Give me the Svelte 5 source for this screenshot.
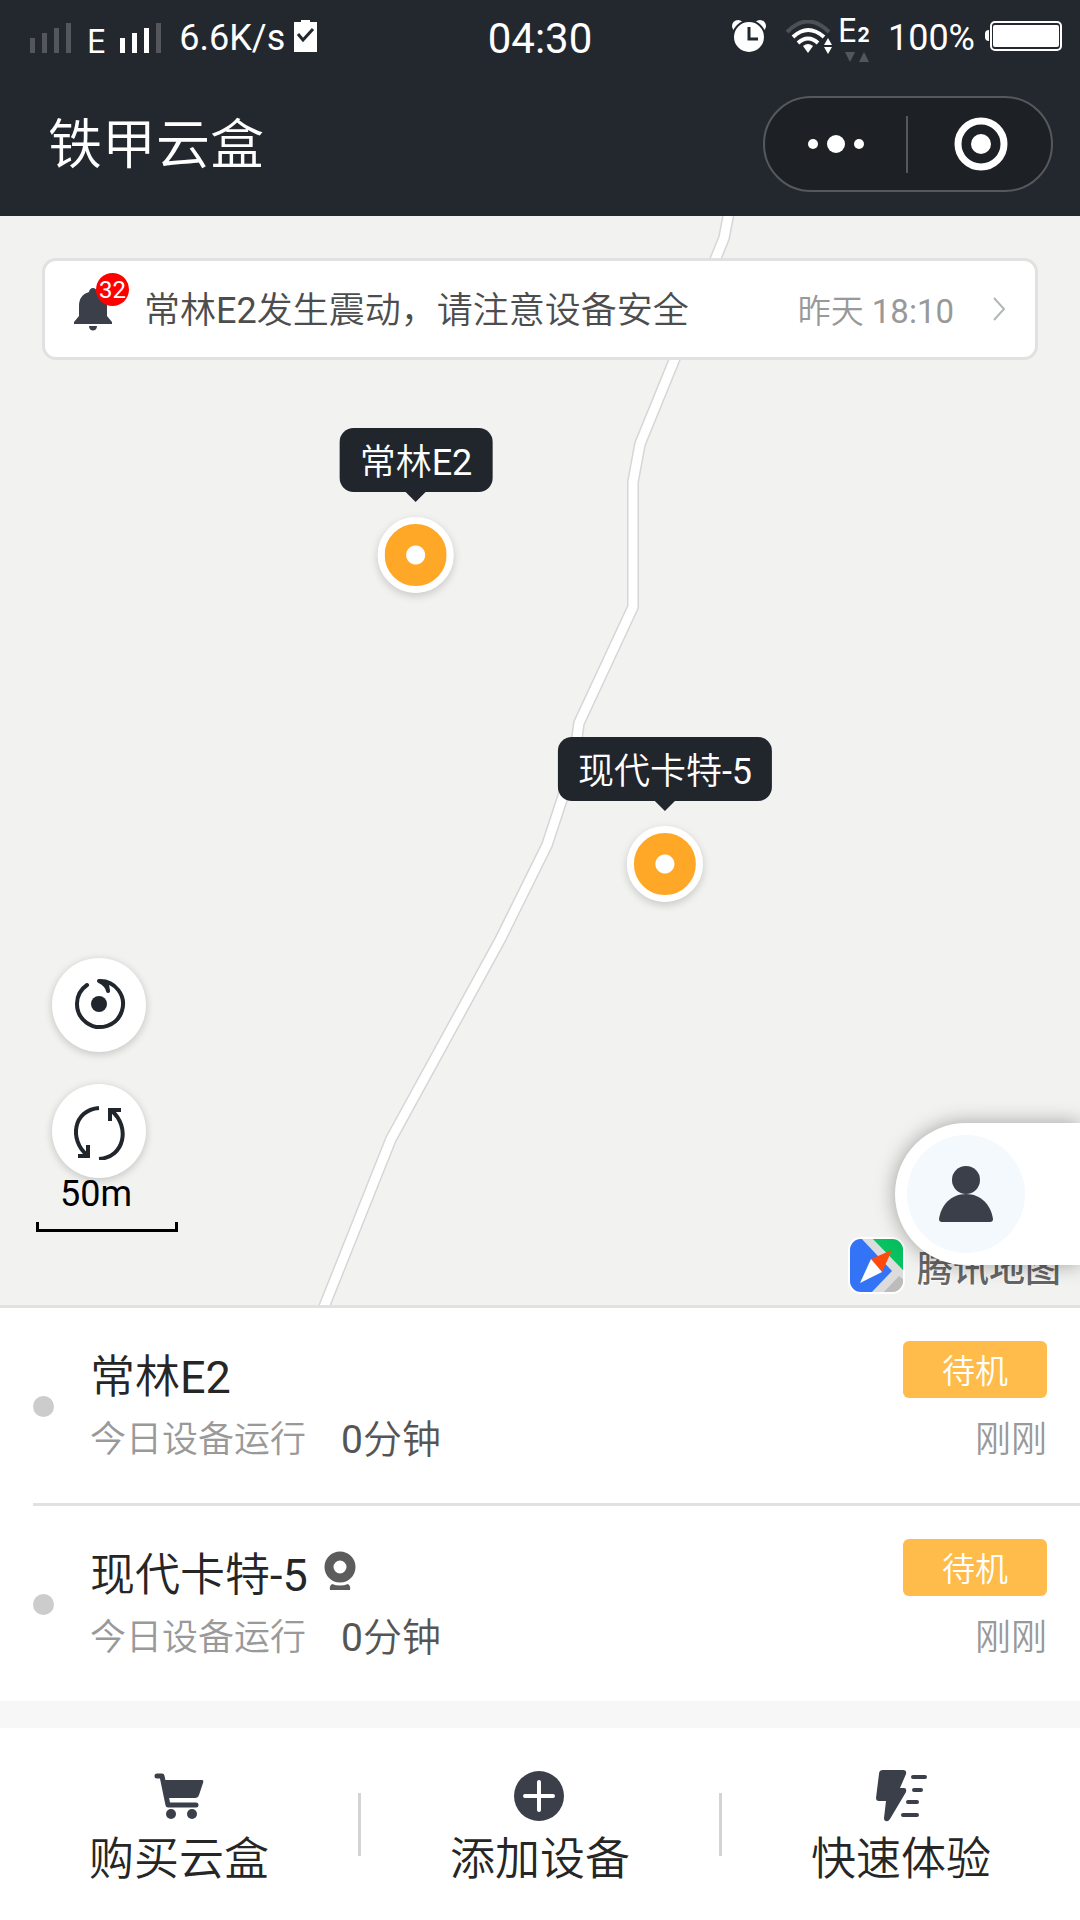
<script lang="ts">
	type Device = {
		id: number;
		name: string;
		runtime: string;
		status: string;
		updated: string;
		camera: boolean;
		x: number;
		y: number;
	};

	// x / y: where the tip of the pin's label stands on the map
	const devices: Device[] = [
		{ id: 1, name: '常林E2', runtime: '0分钟', status: '待机', updated: '刚刚', camera: false, x: 416, y: 286 },
		{ id: 2, name: '现代卡特-5', runtime: '0分钟', status: '待机', updated: '刚刚', camera: true, x: 665, y: 595 }
	];

	const road = '729,-4 724,22 640,228 633,266 633,391 579,507 573,550 547,629 500,724 391,923 322,1096';
</script>

{#snippet signal(level: number)}
	<svg class="signal" width="41" height="30" viewBox="0 0 41 30" aria-hidden="true">
		{#each [15, 20, 25, 30] as h, i}
			<rect x={i * 12} y={30 - h} width="5" height={h} fill={i < level ? '#fff' : '#53575c'} />
		{/each}
	</svg>
{/snippet}

<div class="page">
	<header>
		<div class="status">
			<div class="status-left">
				{@render signal(0)}
				<span class="net">E</span>
				{@render signal(3)}
				<span class="speed">6.6K/s</span>
				<svg width="23" height="32" viewBox="0 0 23 32" aria-hidden="true">
					<path d="M0 2h7V0h9v2h7v30H0z" fill="#fff" />
					<path d="M4 14l5 6 10-11" fill="none" stroke="#23282f" stroke-width="3" />
				</svg>
			</div>
			<span class="clock">04:30</span>
			<div class="status-right">
				<svg width="34" height="32" viewBox="0 0 34 32" aria-hidden="true">
					<circle cx="6" cy="6" r="6" fill="#fff" />
					<circle cx="28" cy="6" r="6" fill="#fff" />
					<circle cx="17" cy="17" r="16" fill="#fff" stroke="#23282f" stroke-width="2" />
					<path d="M17 7v12h9" fill="none" stroke="#23282f" stroke-width="3" />
				</svg>
				<svg class="wifi" width="46" height="34" viewBox="0 0 46 34" aria-hidden="true">
					<g fill="none" stroke-width="4">
						<path d="M1 12Q22-9 43 12" stroke="#4d5156" />
						<path d="M7 17Q22 3 38 17" stroke="#fff" />
						<path d="M12 23q10-9 20 0" stroke="#fff" />
					</g>
					<path d="M17 26q5-4 10 0l-5 7z" fill="#fff" />
					<path d="M38 25l4-7 4 7zM38 27l4 7 4-7z" fill="#fff" />
				</svg>
				<div class="net2">
					<span>E<b>2</b></span>
					<svg width="24" height="10" viewBox="0 0 24 10" aria-hidden="true">
						<path d="M0 0h10L5 10zM14 10h10L19 0z" fill="#53575c" />
					</svg>
				</div>
				<span class="percent">100%</span>
				<svg width="77" height="30" viewBox="0 0 77 30" aria-hidden="true">
					<path d="M4 9Q0 9 0 13v3q0 4 4 4z" fill="#fff" />
					<rect x="6" y="1" width="70" height="28" rx="4" fill="none" stroke="#fff" stroke-width="2" />
					<rect x="8" y="4" width="66" height="22" rx="2" fill="#fff" />
				</svg>
			</div>
		</div>
		<div class="nav">
			<h1>铁甲云盒</h1>
			<div class="capsule">
				<button aria-label="更多">
					<svg width="56" height="20" viewBox="0 0 56 20">
						<g fill="#fff">
							<circle cx="5" cy="10" r="5" />
							<circle cx="28" cy="10" r="9" />
							<circle cx="51" cy="10" r="5" />
						</g>
					</svg>
				</button>
				<span class="bar"></span>
				<button aria-label="关闭">
					<svg width="54" height="54" viewBox="0 0 54 54">
						<circle cx="27" cy="27" r="23" fill="none" stroke="#fff" stroke-width="7" />
						<circle cx="27" cy="27" r="10" fill="#fff" />
					</svg>
				</button>
			</div>
		</div>
	</header>

	<section class="map">
		<svg class="roads" viewBox="0 0 1080 1089" preserveAspectRatio="xMidYMin slice" aria-hidden="true">
			<polyline points={road} stroke="#d6d6d6" stroke-width="12" />
			<polyline points={road} stroke="#fff" stroke-width="9" />
		</svg>

		<a class="notice" href="#messages">
			<span class="bell">
				<svg width="38" height="43" viewBox="0 0 38 43" aria-hidden="true">
					<path d="M19 0c2 0 4 2 4 4 7 2 10 7 10 14v10l5 6v2H0v-2l5-6V18C5 11 8 6 15 4c0-2 2-4 4-4zM15 38h8c0 6-8 6-8 0z" fill="#3a3f4a" />
				</svg>
				<em>32</em>
			</span>
			<span class="message">常林E2发生震动，请注意设备安全</span>
			<time>昨天 18:10</time>
			<svg width="13" height="24" viewBox="0 0 13 24" aria-hidden="true">
				<path d="M1 1l10 11L1 23" fill="none" stroke="#b3b6b9" stroke-width="2" />
			</svg>
		</a>

		{#each devices as device (device.id)}
			<div class="pin" style="left: {device.x}px; top: {device.y}px">
				<span class="label">{device.name}</span>
				<span class="marker"></span>
			</div>
		{/each}

		<div class="controls">
			<button aria-label="定位">
				<svg width="54" height="54" viewBox="1 0 54 54">
					<path d="M16 7A23 23 0 1 0 28 3Q36 7 37 13" fill="none" stroke="#20262c" stroke-width="4" stroke-linecap="round" stroke-linejoin="round" />
					<path d="M28 2l10 3 1 9-4-6z" fill="#20262c" />
					<circle cx="28" cy="26" r="8" fill="#20262c" />
				</svg>
			</button>
			<button aria-label="刷新">
				<svg width="54" height="58" viewBox="0 0 54 58">
					<g fill="none" stroke="#20262c" stroke-width="4">
						<path d="M27 6C1 8-3 38 15 53M6 54h10V43" />
						<path d="M27 57C53 55 58 25 40 9M49 8H38v11" />
					</g>
				</svg>
			</button>
		</div>

		<div class="scale">
			<span>50m</span>
			<i></i>
		</div>

		<div class="brand">
			<svg width="57" height="57" viewBox="0 0 57 57" aria-hidden="true">
				<defs>
					<clipPath id="tile"><rect x="2" y="2" width="53" height="53" rx="11" /></clipPath>
				</defs>
				<rect width="57" height="57" rx="13" fill="#fff" />
				<g clip-path="url(#tile)">
					<rect width="57" height="57" fill="#dcdcdc" />
					<path d="M0 0h12l32 34L22 57H0z" fill="#3274f5" />
					<path d="M23 0h34v35z" fill="#08c160" />
					<path d="M34 57l17-18 6 5v13z" fill="#bcbcbc" />
				</g>
				<path d="M44 13L23 22l11 13z" fill="#ff4a0c" />
				<path d="M23 22L12 46l22-11z" fill="#fff" />
			</svg>
			<span>腾讯地图</span>
		</div>

		<a class="profile" href="#me" aria-label="我的">
			<span>
				<svg width="56" height="57" viewBox="0 0 56 57">
					<circle cx="28" cy="14" r="14" fill="#3a3f4a" />
					<path d="M28 28c15 0 25 11 27 25q0 3-3 3H4q-3 0-3-3C3 39 13 28 28 28z" fill="#3a3f4a" />
				</svg>
			</span>
		</a>
	</section>

	<ul class="devices">
		{#each devices as device (device.id)}
			<li>
				<span class="dot"></span>
				<div class="info">
					<h2>
						{device.name}
						{#if device.camera}
							<svg width="32" height="40" viewBox="0 0 32 40" aria-hidden="true">
								<circle cx="16" cy="16" r="11" fill="none" stroke="#5c5c5c" stroke-width="9" />
								<path d="M8 33q8 3 16 0 3 2 2 6H6q-1-4 2-6z" fill="#5c5c5c" />
							</svg>
						{/if}
					</h2>
					<p>今日设备运行 <strong>{device.runtime}</strong></p>
				</div>
				<div class="state">
					<span class="tag">{device.status}</span>
					<span class="updated">{device.updated}</span>
				</div>
			</li>
		{/each}
	</ul>

	<nav class="actions">
		<a href="#buy">
			<svg width="52" height="52" viewBox="0 0 52 52" aria-hidden="true">
				<path d="M4 6h5l6 29h28" fill="none" stroke="#3a3f4a" stroke-width="5" stroke-linecap="round" stroke-linejoin="round" />
				<path d="M12 10h37q2 0 1 3l-4 12q-1 3-4 3H14z" fill="#3a3f4a" />
				<circle cx="18" cy="44" r="5" fill="#3a3f4a" />
				<circle cx="39" cy="44" r="5" fill="#3a3f4a" />
			</svg>
			<span>购买云盒</span>
		</a>
		<i></i>
		<a href="#add">
			<svg width="52" height="52" viewBox="0 0 52 52" aria-hidden="true">
				<circle cx="25" cy="26" r="25" fill="#3a3f4a" />
				<path d="M25 12v28M11 26h28" stroke="#fff" stroke-width="4" stroke-linecap="round" />
			</svg>
			<span>添加设备</span>
		</a>
		<i></i>
		<a href="#try">
			<svg width="52" height="52" viewBox="0 0 52 52" aria-hidden="true">
				<path d="M8 0h20q4 0 3 4l-6 14h4q3 0 2 4L15 49q-2 3-4 2-2 0-2-3l2-17H4q-3 0-3-3L4 4q0-4 4-4z" fill="#3a3f4a" />
				<path d="M38 7h12M39 20h7M33 32h9M28 45h14" stroke="#3a3f4a" stroke-width="4" stroke-linecap="round" />
			</svg>
			<span>快速体验</span>
		</a>
	</nav>
</div>

<style>
	:global(body) {
		margin: 0;
		background: #fff;
	}

	.page {
		display: flex;
		flex-direction: column;
		min-height: 100vh;
		font-family: Roboto, 'Noto Sans CJK SC DemiLight', 'Noto Sans CJK SC', sans-serif;
		font-weight: 400;
		color: #262626;
	}

	.page * {
		box-sizing: border-box;
	}

	h1,
	h2,
	p,
	ul {
		margin: 0;
		padding: 0;
		font-weight: inherit;
	}

	svg {
		display: block;
		flex: none;
	}

	a {
		color: inherit;
		text-decoration: none;
	}

	button {
		display: flex;
		align-items: center;
		justify-content: center;
		padding: 0;
		border: none;
		background: none;
		cursor: pointer;
	}

	header {
		background: #23282f;
		color: #fff;
	}

	.status {
		display: grid;
		grid-template-columns: 1fr auto 1fr;
		align-items: center;
		height: 72px;
		padding: 0 18px;
		font-size: 36px;
	}

	.status-left,
	.status-right {
		display: flex;
		align-items: center;
	}

	.status-left {
		padding-left: 12px;
	}

	.status-right {
		justify-content: flex-end;
	}

	.signal {
		margin-top: 4px;
	}

	.net,
	.net2 {
		font-family: Inter, sans-serif;
		font-size: 32px;
	}

	.net {
		margin: 10px 14px 0 16px;
	}

	.speed {
		margin: 4px 9px 0 18px;
	}

	.clock {
		margin-top: 4px;
		font-size: 42px;
	}

	.wifi {
		margin: 2px 6px 0 20px;
	}

	.net2 {
		display: flex;
		flex-direction: column;
		gap: 1px;
		margin-top: 4px;
		line-height: 32px;
	}

	.net2 svg {
		margin-left: 7px;
	}

	.net2 b {
		font-size: 20px;
	}

	.percent {
		margin: 4px 10px 0 18px;
	}

	.nav {
		display: flex;
		align-items: center;
		justify-content: space-between;
		height: 144px;
		padding: 0 27px 0 48px;
	}

	h1 {
		padding-top: 4px;
		font-size: 54px;
		line-height: 64px;
	}

	.capsule {
		display: flex;
		align-items: center;
		width: 290px;
		height: 96px;
		border: 2px solid #55595d;
		border-radius: 48px;
		background: #1d2125;
	}

	.capsule button {
		flex: 1;
		height: 100%;
	}

	.capsule .bar {
		width: 2px;
		height: 57px;
		margin-right: 2px;
		background: #55595d;
	}

	.map {
		position: relative;
		flex: 1;
		min-height: 900px;
		overflow: hidden;
		border-bottom: 3px solid #e1e1e0;
		background: #f2f2f0;
	}

	.roads {
		position: absolute;
		width: 100%;
		height: 100%;
		fill: none;
	}

	.notice {
		position: relative;
		display: flex;
		align-items: center;
		height: 102px;
		margin: 42px;
		padding: 0 29px;
		border: 3px solid #e1e1e1;
		border-radius: 14px;
		background: #fff;
		font-size: 36px;
		color: #4d4d4d;
	}

	.bell {
		position: relative;
		margin-right: 32px;
	}

	.bell em {
		position: absolute;
		top: -15px;
		left: 22px;
		width: 33px;
		height: 33px;
		border-radius: 50%;
		background: #f00;
		color: #fff;
		font-size: 24px;
		font-style: normal;
		line-height: 34px;
		text-align: center;
	}

	.message {
		flex: 1;
		padding-top: 3px;
		line-height: 44px;
	}

	.notice time {
		margin-right: 39px;
		font-size: 33px;
		color: #999;
	}

	.pin {
		position: absolute;
		display: flex;
		flex-direction: column;
		align-items: center;
		gap: 25px;
		transform: translate(-50%, -74px);
	}

	.label {
		position: relative;
		height: 64px;
		padding: 3px 20px 0;
		border-radius: 14px;
		background: #21262c;
		color: #fff;
		font-size: 36px;
		line-height: 64px;
		white-space: nowrap;
	}

	.label::after {
		content: '';
		position: absolute;
		top: 100%;
		left: 50%;
		margin-left: -10px;
		border: 10px solid transparent;
		border-top-color: #21262c;
		border-bottom: none;
	}

	.marker {
		width: 76px;
		height: 76px;
		border: 7px solid #fff;
		border-radius: 50%;
		background: radial-gradient(circle, #fff 9px, #ffa726 10px);
		box-shadow: 0 3px 8px rgba(0, 0, 0, 0.18);
	}

	.controls {
		position: absolute;
		bottom: 127px;
		left: 52px;
		display: flex;
		flex-direction: column;
		gap: 32px;
	}

	.controls button {
		width: 94px;
		height: 94px;
		border-radius: 50%;
		background: #fff;
		box-shadow: 0 2px 8px rgba(0, 0, 0, 0.2);
	}

	.scale {
		position: absolute;
		bottom: 73px;
		left: 36px;
		width: 142px;
		color: #000;
		font-size: 36px;
		line-height: 44px;
	}

	.scale span {
		display: block;
		padding: 0 0 6px 24px;
	}

	.scale i {
		display: block;
		height: 10px;
		border: 3px solid #000;
		border-top: none;
	}

	.brand {
		position: absolute;
		right: 19px;
		bottom: 11px;
		display: flex;
		align-items: center;
		gap: 12px;
		color: #666;
		font-family: 'Noto Sans CJK SC', sans-serif;
		font-size: 36px;
		font-weight: 500;
		line-height: 44px;
		text-shadow: 0 0 3px #fff, 0 0 3px #fff;
	}

	.profile {
		position: absolute;
		right: 0;
		bottom: 40px;
		width: 185px;
		height: 142px;
		padding: 12px;
		border-radius: 71px 0 0 71px;
		background: #fff;
		box-shadow: 0 0 20px rgba(0, 0, 0, 0.35);
	}

	.profile span {
		display: flex;
		align-items: center;
		justify-content: center;
		width: 118px;
		height: 118px;
		border-radius: 50%;
		background: #f4f9fd;
	}

	.devices {
		list-style: none;
		border-bottom: 27px solid #f7f7f7;
	}

	.devices li {
		display: flex;
		align-items: center;
		margin-left: 33px;
		padding: 33px 33px 31px 0;
	}

	.devices li + li {
		border-top: 3px solid #e1e1e1;
	}

	.dot {
		width: 21px;
		height: 21px;
		margin-right: 36px;
		border-radius: 50%;
		background: #ccc;
	}

	.info {
		flex: 1;
		padding-top: 7px;
	}

	h2 {
		display: flex;
		align-items: center;
		gap: 16px;
		font-size: 45px;
		line-height: 60px;
	}

	h2 svg {
		margin-bottom: 10px;
	}

	p {
		display: flex;
		align-items: center;
		gap: 35px;
		font-size: 36px;
		line-height: 64px;
		color: #999;
	}

	strong {
		font-size: 39px;
		font-weight: inherit;
		color: #555;
	}

	.state {
		display: flex;
		flex-direction: column;
		align-items: flex-end;
		gap: 10px;
	}

	.tag {
		width: 144px;
		height: 57px;
		padding-top: 2px;
		border-radius: 6px;
		background: #ffbc4b;
		color: #fff;
		font-size: 33px;
		line-height: 57px;
		text-align: center;
	}

	.updated {
		font-size: 36px;
		line-height: 64px;
		color: #999;
	}

	.actions {
		display: flex;
		align-items: center;
		height: 192px;
	}

	.actions a {
		display: flex;
		flex: 1;
		flex-direction: column;
		align-items: center;
		gap: 6px;
		padding-top: 14px;
		font-size: 45px;
		line-height: 64px;
	}

	.actions i {
		width: 3px;
		height: 63px;
		background: #d4d4d4;
	}
</style>
